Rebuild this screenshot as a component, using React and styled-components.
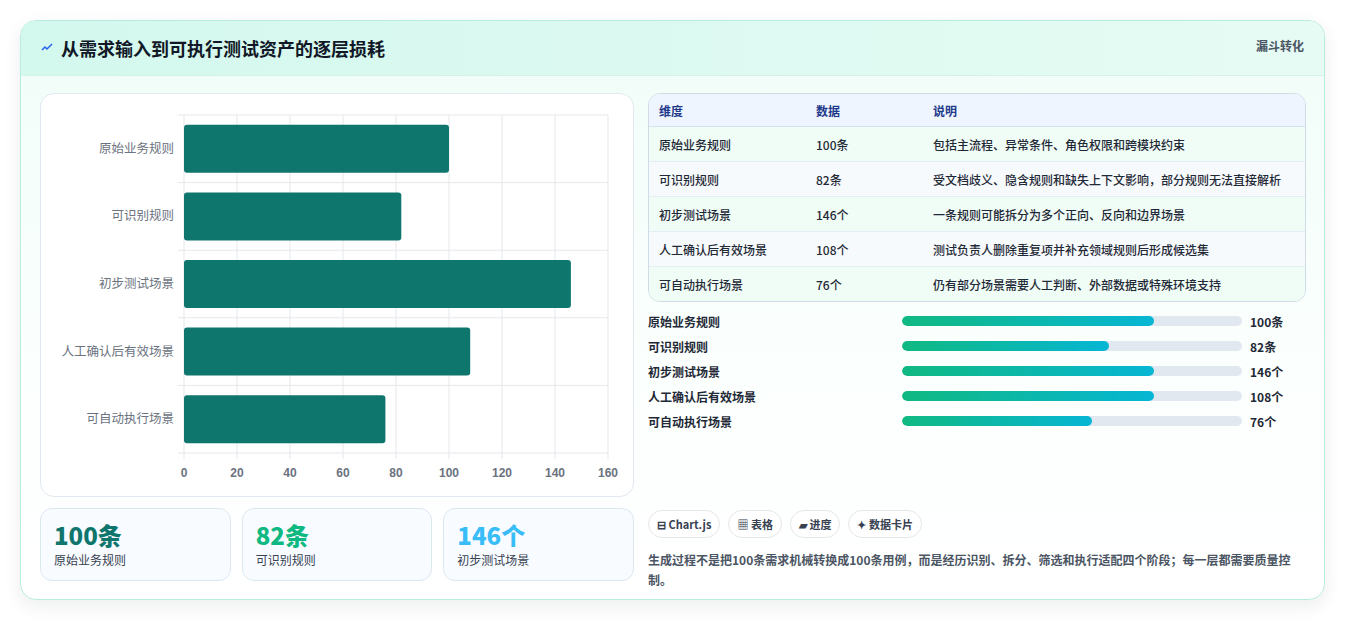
import React from "react";
import styled, { createGlobalStyle } from "styled-components";

const G = createGlobalStyle`
  body{margin:0;background:#fff;font-family:"Noto Sans CJK SC","Noto Sans",sans-serif;}
`;
const Page = styled.div`padding:20px 20px 20px 20px;height:620px;box-sizing:border-box;`;
const Card = styled.div`
  border:1px solid #b9ece0;border-radius:16px;overflow:hidden;height:580px;box-sizing:border-box;
  background:linear-gradient(180deg,#f0fdf8 0%,#fbfffd 60%,#ffffff 100%);
  box-shadow:0 6px 18px rgba(15,23,42,0.08);
`;
const Header = styled.div`
  height:55px;box-sizing:border-box;display:flex;justify-content:space-between;align-items:flex-start;
  padding:14px 20px 0 20px;background:linear-gradient(90deg,#d3f8ee,#e6fbf4);border-bottom:1px solid #d4f2e8;
`;
const Title = styled.h1`margin:0;font-size:18px;font-weight:700;color:#111827;display:flex;align-items:center;gap:8px;line-height:26px;`;
const Tag = styled.span`font-size:12px;font-weight:700;color:#4b5563;margin-top:2px;`;
const Body = styled.div`display:grid;grid-template-columns:594px 658px;gap:14px;padding:17px 18px 0 19px;`;
const Left = styled.div`display:flex;flex-direction:column;gap:11px;`;
const ChartBox = styled.div`background:#fff;border:1px solid #e2e8f0;border-radius:14px;height:404px;box-sizing:border-box;`;
const Stats = styled.div`display:grid;grid-template-columns:repeat(3,1fr);gap:11px;`;
const Stat = styled.div`border:1px solid #dbe7ef;border-radius:12px;background:#f8fbff;height:73px;box-sizing:border-box;padding:10px 13px;`;
const StatNum = styled.div`font-size:24px;font-weight:800;color:${p=>p.c};line-height:32px;`;
const StatLbl = styled.div`font-size:12px;color:#374151;`;
const Right = styled.div`display:flex;flex-direction:column;`;
const Table = styled.table`width:100%;border-collapse:separate;border-spacing:0;border:1px solid #cfdbe6;border-radius:12px;overflow:hidden;font-size:12px;color:#1f2937;`;
const Th = styled.th`text-align:left;font-weight:700;color:#1e3a8a;background:#eef5ff;height:32px;padding:0 10px;border-bottom:1px solid #d5e1ee;`;
const Td = styled.td`height:34px;padding:0 10px;border-bottom:${p=>p.last?"none":"1px solid #e5edf3"};background:${p=>p.alt?"#f7fafc":"#f0fcf6"};font-weight:500;`;
const Bars = styled.div`display:flex;flex-direction:column;gap:7px;margin-top:10px;`;
const BarRow = styled.div`display:grid;grid-template-columns:246px 340px 1fr;align-items:center;column-gap:8px;height:18px;font-size:12px;font-weight:600;color:#1f2937;`;
const Track = styled.div`height:10px;border-radius:5px;background:#e2e8f0;overflow:hidden;`;
const Fill = styled.div`height:100%;border-radius:5px;background:linear-gradient(90deg,#10b981,#06b6d4);`;
const Chips = styled.div`display:flex;gap:8px;margin-top:80px;`;
const Chip = styled.span`font-size:11px;font-weight:700;color:#374151;border:1px solid #e5e7eb;border-radius:14px;padding:5px 8px;background:#fff;`;
const Note = styled.p`margin:12px 0 0;font-size:12px;font-weight:600;color:#4b5563;line-height:20px;`;

const data=[["原始业务规则",100,"条","包括主流程、异常条件、角色权限和跨模块约束",74],["可识别规则",82,"条","受文档歧义、隐含规则和缺失上下文影响，部分规则无法直接解析",61],["初步测试场景",146,"个","一条规则可能拆分为多个正向、反向和边界场景",74],["人工确认后有效场景",108,"个","测试负责人删除重复项并补充领域规则后形成候选集",74],["可自动执行场景",76,"个","仍有部分场景需要人工判断、外部数据或特殊环境支持",56]];

function Chart(){
  const x0=143,x1=567,y0=21,y1=359,band=(y1-y0)/5,sc=(x1-x0)/160;
  return <svg width="594" height="402" style={{display:"block"}}>
    {[0,20,40,60,80,100,120,140,160].map(v=>{const x=x0+v*sc;return <g key={v}>
      <line x1={x} x2={x} y1={y0} y2={y1+6} stroke="#e5e7eb"/>
      <text x={x} y={383} fontSize="12" fill="#6b7280" textAnchor="middle" fontFamily="Liberation Sans" fontWeight="600">{v}</text></g>})}
    {[0,1,2,3,4,5].map(i=><line key={i} x1={x0-6} x2={x1} y1={y0+i*band} y2={y0+i*band} stroke="#e5e7eb"/>)}
    {data.map((d,i)=>{const cy=y0+band*i+band/2;return <g key={i}>
      <rect x={x0} y={cy-24} width={d[1]*sc} height={48} rx={3} fill="#0f766e"/>
      <text x={x0-10} y={cy+4} fontSize="12.5" fill="#6b7280" textAnchor="end">{d[0]}</text></g>})}
  </svg>;
}

export default function App(){
  return <><G/><Page><Card>
    <Header><Title><svg width="12" height="12" viewBox="0 0 12 12"><path d="M1 8l3-3 2 2 5-5" stroke="#2563eb" strokeWidth="1.5" fill="none"/></svg>从需求输入到可执行测试资产的逐层损耗</Title><Tag>漏斗转化</Tag></Header>
    <Body>
      <Left>
        <ChartBox><Chart/></ChartBox>
        <Stats>
          <Stat><StatNum c="#0f766e">100条</StatNum><StatLbl>原始业务规则</StatLbl></Stat>
          <Stat><StatNum c="#10b981">82条</StatNum><StatLbl>可识别规则</StatLbl></Stat>
          <Stat><StatNum c="#38bdf8">146个</StatNum><StatLbl>初步测试场景</StatLbl></Stat>
        </Stats>
      </Left>
      <Right>
        <Table><thead><tr><Th style={{width:137}}>维度</Th><Th style={{width:97}}>数据</Th><Th>说明</Th></tr></thead>
          <tbody>{data.map((d,i)=><tr key={i}><Td alt={i%2} last={i===4}>{d[0]}</Td><Td alt={i%2} last={i===4}>{d[1]}{d[2]}</Td><Td alt={i%2} last={i===4}>{d[3]}</Td></tr>)}</tbody>
        </Table>
        <Bars>{data.map((d,i)=><BarRow key={i}><span>{d[0]}</span><Track><Fill style={{width:d[4]+"%"}}/></Track><span>{d[1]}{d[2]}</span></BarRow>)}</Bars>
        <Chips><Chip>⊟ Chart.js</Chip><Chip>▦ 表格</Chip><Chip>▰ 进度</Chip><Chip>✦ 数据卡片</Chip></Chips>
        <Note>生成过程不是把100条需求机械转换成100条用例，而是经历识别、拆分、筛选和执行适配四个阶段；每一层都需要质量控制。</Note>
      </Right>
    </Body>
  </Card></Page></>;
}
